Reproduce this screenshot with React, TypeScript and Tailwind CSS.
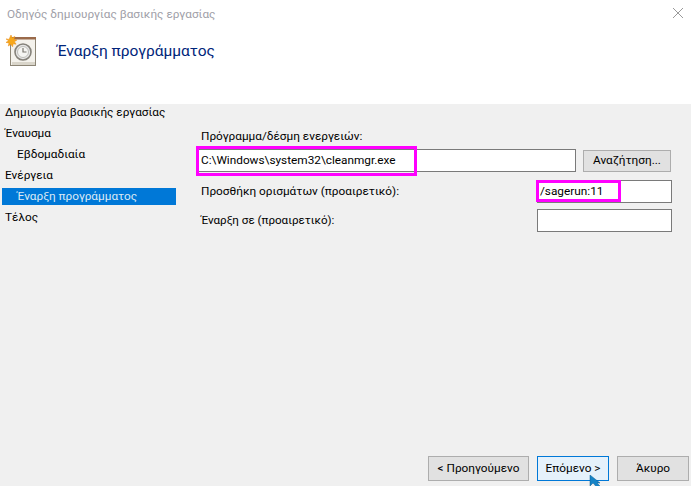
const font = { fontFamily: 'Roboto, "Noto Sans", sans-serif' };

const steps = [
  { label: 'Δημιουργία βασικής εργασίας' },
  { label: 'Έναυσμα' },
  { label: 'Εβδομαδιαία', indent: true },
  { label: 'Ενέργεια' },
  { label: 'Έναρξη προγράμματος', indent: true, selected: true },
  { label: 'Τέλος' },
];

function TaskIcon() {
  return (
    <svg width="32" height="32" viewBox="0 0 32 32" className="shrink-0">
      <rect x="5.5" y="2.5" width="25" height="28" fill="#f4f2ec" stroke="#8d8676" />
      <rect x="8" y="2" width="23" height="2.5" fill="#9a6a4a" />
      <rect x="7" y="27" width="23" height="3" fill="#d9d5ca" />
      <circle cx="18" cy="17" r="8" fill="#e6e6e6" stroke="#85827a" strokeWidth="1.6" />
      <circle cx="18" cy="17" r="5.5" fill="#f5f5f2" stroke="#bdbdb8" />
      <path d="M18 13v4h3.5" fill="none" stroke="#7a776f" strokeWidth="1.2" />
      <path d="M6 0l1.2 3 2.6-1.6-.9 3 3 .6-2.5 1.7 1.7 2.5-3-.4-.5 3-1.8-2.5-2.5 1.7.7-3-3-.6 2.6-1.7-2.6-1.8 3 .5z" fill="#f7a81b" stroke="#e98a10" strokeWidth=".5" />
    </svg>
  );
}

function Button({ label, focused, className }: { label: string; focused?: boolean; className: string }) {
  return (
    <div
      className={
        focused
          ? `flex items-center justify-center border border-[#0078d7] bg-[#e5f1fb] text-[11.8px] text-black ${className}`
          : `flex items-center justify-center border border-[#adadad] bg-[#e1e1e1] text-[11.8px] text-black ${className}`
      }
    >
      {label}
    </div>
  );
}

export default function App() {
  return (
    <div className="flex h-[486px] w-[691px] flex-col overflow-hidden bg-white text-black" style={font}>
      <div className="h-[104px] shrink-0">
        <div className="flex h-[30px] items-center justify-between pl-[7px] pr-[8px]">
          <span className="text-[11.8px] text-[#a0a0a8]">Οδηγός δημιουργίας βασικής εργασίας</span>
          <svg width="10" height="10" viewBox="0 0 10 10" className="mb-[5px]">
            <path d="M0 0l10 10M10 0L0 10" stroke="#9a9a9a" strokeWidth="1" />
          </svg>
        </div>
        <div className="flex items-center pl-[5px] pt-[5px]">
          <TaskIcon />
          <span className="ml-[20px] mt-[2px] text-[15.5px] text-[#00257a]">Έναρξη προγράμματος</span>
        </div>
      </div>

      <div className="relative flex flex-1 bg-[#f0f0f0]">
        <div className="w-[176px] shrink-0">
          {steps.map((s) => (
            <div
              key={s.label}
              className={`h-[21px] text-[11.8px] leading-[17px] ${s.indent ? 'pl-[17px]' : 'pl-[5px]'} ${s.selected ? 'text-white' : 'text-black'}`}
            >
              {s.selected ? (
                <div className="-ml-[15px] h-[17px] w-[174px] bg-[#0078d7] pl-[15px] text-[#dbe9f5]">{s.label}</div>
              ) : (
                s.label
              )}
            </div>
          ))}
        </div>

        <div className="flex-1 pl-[21px] pr-[19px] pt-[24px]">
          <div className="pl-[4px] text-[11.8px] leading-[16px]">Πρόγραμμα/δέσμη ενεργειών:</div>
          <div className="mt-[5px] flex gap-[7px]">
            <div className="relative h-[23px] w-[379px] border border-[#7a7a7a] bg-white pl-[3px] text-[11.8px] leading-[21px]">
              C:\Windows\system32\cleanmgr.exe
              <div className="absolute -left-[2px] -top-[4px] h-[30px] w-[221px] border-[3px] border-[#ff00ff]" />
            </div>
            <Button label="Αναζήτηση..." className="mt-[1px] h-[22px] w-[88px]" />
          </div>
          <div className="mt-[8px] flex items-center justify-between">
            <span className="pl-[4px] pt-[1px] text-[11.8px]">Προσθήκη ορισμάτων (προαιρετικό):</span>
            <div className="relative h-[23px] w-[135px] border border-[#7a7a7a] bg-white pl-[2px] text-[11.8px] leading-[20px]">
              /sagerun:11
              <div className="absolute -left-[2px] -top-[1px] h-[22px] w-[85px] border-[3px] border-[#ff00ff]" />
            </div>
          </div>
          <div className="mt-[6px] flex items-center justify-between">
            <span className="pl-[4px] pt-[1px] text-[11.6px]">Έναρξη σε (προαιρετικό):</span>
            <div className="h-[23px] w-[135px] border border-[#7a7a7a] bg-white" />
          </div>
        </div>

        <div className="absolute bottom-[5px] right-[2px] flex gap-[8px]">
          <Button label="< Προηγούμενο" className="h-[25px] w-[101px]" />
          <Button label="Επόμενο >" focused className="h-[25px] w-[72px]" />
          <Button label="Άκυρο" className="h-[25px] w-[72px]" />
        </div>

        <svg width="14" height="14" viewBox="0 0 14 14" className="absolute left-[589px] top-[371px]">
          <path d="M1 0v11l3-3 1 1 4 5h5L8 8h3z" fill="#1583c6" stroke="#0e5f92" strokeWidth=".5" />
        </svg>
      </div>
    </div>
  );
}
